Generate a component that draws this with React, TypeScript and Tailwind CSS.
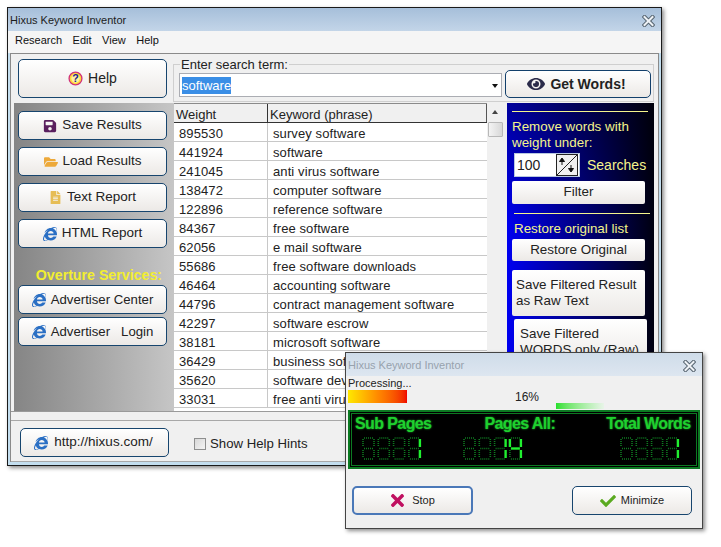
import type { ReactNode } from "react";
import { FaCheck, FaEye, FaFileAlt, FaFolderOpen, FaInternetExplorer, FaSave, FaTimes } from "react-icons/fa";

const rows = [
  ["895530", "survey software"],
  ["441924", "software"],
  ["241045", "anti virus software"],
  ["138472", "computer software"],
  ["122896", "reference software"],
  ["84367", "free software"],
  ["62056", "e mail software"],
  ["55686", "free software downloads"],
  ["46464", "accounting software"],
  ["44796", "contract management software"],
  ["42297", "software escrow"],
  ["38181", "microsoft software"],
  ["36429", "business software"],
  ["35620", "software development"],
  ["33031", "free anti virus"],
];

// segments of one lcd digit: x1 y1 x2 y2
const segments: Record<string, number[]> = {
  a: [2, 1, 11, 1],
  b: [12, 2, 12, 10],
  c: [12, 13, 12, 21],
  d: [2, 22, 11, 22],
  e: [1, 13, 1, 21],
  f: [1, 2, 1, 10],
  g: [2, 11.5, 11, 11.5],
};
const litByDigit: Record<string, string> = { "1": "bc", "4": "fgbc" };

function Lcd({ value, className }: { value: string; className?: string }) {
  return (
    <svg width="60" height="23" viewBox="0 0 60 23" className={className}>
      {value.split("").map((ch, i) => (
        <g key={i} transform={`translate(${i * 15.3} 0)`}>
          {Object.entries(segments)
            .sort(([a], [b]) => Number((litByDigit[ch] || "").includes(a)) - Number((litByDigit[ch] || "").includes(b)))
            .map(([name, [x1, y1, x2, y2]]) => {
              const lit = (litByDigit[ch] || "").includes(name);
              return (
                <line
                  key={name}
                  x1={x1}
                  y1={y1}
                  x2={x2}
                  y2={y2}
                  stroke={lit ? "#20f030" : "#0e7a20"}
                  strokeWidth={lit ? 2.4 : 1.6}
                  strokeDasharray={lit ? undefined : "1 1"}
                />
              );
            })}
        </g>
      ))}
    </svg>
  );
}

function Btn({ children, className }: { children: ReactNode; className: string }) {
  return (
    <div
      className={`flex items-center justify-center gap-[5px] rounded-[5px] border bg-gradient-to-b from-[#ffffff] to-[#ece9e6] text-[#222] ${className}`}
    >
      {children}
    </div>
  );
}

function HelpIcon() {
  return (
    <svg width="15" height="15" viewBox="0 0 14 14">
      <circle cx="7" cy="7" r="6" fill="#ffd83a" stroke="#d0307a" strokeWidth="1.2" />
      <circle cx="7" cy="7" r="3.9" fill="#fff2a0" />
      <text x="7" y="10.5" textAnchor="middle" fontSize="10" fontWeight="700" fill="#1a1a90" fontFamily="Liberation Sans">
        ?
      </text>
    </svg>
  );
}

function CloseIcon() {
  return (
    <svg width="13" height="12" viewBox="0 0 13 12">
      <path d="M2.5 2 10.5 10M10.5 2 2.5 10" stroke="#55636f" strokeWidth="4" strokeLinecap="square" />
      <path d="M2.5 2 10.5 10M10.5 2 2.5 10" stroke="#eef2f6" strokeWidth="2" strokeLinecap="square" />
    </svg>
  );
}

function Ie() {
  return <FaInternetExplorer className="text-[14px] text-[#2a6fc4]" />;
}

export default function App() {
  return (
    <div className="relative h-[547px] w-[721px] overflow-hidden bg-white [font-family:'Liberation_Sans',Arial,sans-serif]">
      {/* main window */}
      <div className="absolute left-[7px] top-[7px] flex h-[459px] w-[655px] flex-col border border-[#1a1a1a] bg-[#c3deef] shadow-[2px_2px_4px_rgba(0,0,0,0.45)]">
        <div className="flex h-[23px] shrink-0 items-center justify-between bg-gradient-to-b from-[#a6bfda] to-[#c3d5e8] pl-[2px] pr-[6px] pt-[2px] text-[11px] text-[#1c1c1c]">
          <span>Hixus Keyword Inventor</span>
          <CloseIcon />
        </div>
        <div className="flex h-[22px] shrink-0 items-center gap-[10.5px] bg-[#f5f5f5] pb-[3px] pl-[7px] text-[11px] text-[#111]">
          <span>Research</span>
          <span>Edit</span>
          <span>View</span>
          <span>Help</span>
        </div>
        <div className="mx-[2px] flex h-[409px] flex-col border-x border-t border-[#8a8a8a] bg-[#f0f0f0]">
          {/* top row */}
          <div className="flex h-[49px] shrink-0 items-start">
            <Btn className="ml-[7px] mt-[5px] h-[39px] w-[149px] border-[#17456e] text-[14px]">
              <HelpIcon />
              <span>Help</span>
            </Btn>
            <fieldset className="ml-[6px] mt-[3px] h-[45px] w-[481px] border border-[#cfcfcf] pl-[5px]">
              <legend className="ml-[1px] px-[1px] text-[13px] leading-[15px] text-[#222]">Enter search term:</legend>
              <div className="flex items-start">
                <div className="mt-[1px] flex h-[24px] w-[323px] items-center justify-between border border-[#abadb3] bg-white pl-[2px] pr-[3px]">
                  <span className="bg-[#3a8ee6] text-[13px] leading-[17px] text-white">software</span>
                  <span className="mt-[1px] h-0 w-0 border-x-[3px] border-t-[4px] border-x-transparent border-t-[#111]" />
                </div>
                <Btn className="-mt-[2px] ml-[3px] h-[28px] w-[146px] gap-[3px] border-[#123f6b] pr-[3px] text-[14px]">
                  <FaEye className="text-[18px] text-[#2b2b4a]" />
                  <span className="font-bold">Get Words!</span>
                </Btn>
              </div>
            </fieldset>
          </div>

          {/* middle */}
          <div className="ml-[3px] flex h-[308px] w-[640px] shrink-0">
            <div className="flex w-[160px] shrink-0 flex-col bg-gradient-to-r from-[#858585] to-[#c6c6c6] pl-[4px] pt-[8px]">
              <Btn className="h-[29px] w-[149px] border-[#17456e] text-[13.5px]">
                <FaSave className="text-[14px] text-[#5a1f5e]" />
                <span>Save Results</span>
              </Btn>
              <Btn className="mt-[7px] h-[29px] w-[149px] border-[#17456e] text-[13.5px]">
                <FaFolderOpen className="text-[14px] text-[#eda93a]" />
                <span>Load Results</span>
              </Btn>
              <Btn className="mt-[7px] h-[29px] w-[149px] border-[#17456e] text-[13.5px]">
                <FaFileAlt className="text-[13px] text-[#e6bd55]" />
                <span>Text Report</span>
              </Btn>
              <Btn className="mt-[7px] h-[29px] w-[149px] border-[#17456e] text-[13.5px]">
                <Ie />
                <span>HTML Report</span>
              </Btn>
              <div className="mt-[18px] h-[18px] w-[144px] whitespace-nowrap text-right text-[14.2px] font-bold leading-[18px] text-[#f2ee30]">Overture Services:</div>
              <Btn className="mt-[1px] h-[29px] w-[149px] border-[#17456e] text-[13.2px]">
                <Ie />
                <span>Advertiser Center</span>
              </Btn>
              <Btn className="mt-[3px] h-[29px] w-[149px] border-[#17456e] text-[13.2px]">
                <Ie />
                <span className="whitespace-pre">Advertiser   Login</span>
              </Btn>
            </div>

            <div className="w-[313px] shrink-0 overflow-hidden bg-white">
              <div className="flex h-[20px] border-y border-t-[#8a8a8a] border-b-[#333] bg-[#f0f0f0] text-[13px] leading-[21px] text-[#222]">
                <div className="w-[94px] shrink-0 border-r border-[#333] pl-[2px]">Weight</div>
                <div className="flex-1 border-r border-[#555] pl-[2px]">Keyword (phrase)</div>
              </div>
              {rows.map(([weight, word]) => (
                <div key={weight} className="flex h-[19px] border-b border-[#c8c8c8] text-[13px] leading-[22px] tracking-[0.1px] text-[#222]">
                  <div className="w-[94px] shrink-0 border-r border-[#c8c8c8] pl-[5px]">{weight}</div>
                  <div className="flex-1 pl-[5px]">{word}</div>
                </div>
              ))}
            </div>

            <div className="flex w-[16px] shrink-0 flex-col items-center bg-[#f0f0f0] pt-[7px]">
              <span className="h-0 w-0 border-x-[3px] border-b-[4px] border-x-transparent border-b-[#444]" />
              <div className="mt-[8px] h-[15px] w-[15px] rounded-[1px] border border-[#b8b8b8] bg-gradient-to-r from-[#f4f4f4] to-[#d8d8d8]" />
            </div>

            <div className="ml-[4px] flex w-[147px] shrink-0 flex-col bg-[linear-gradient(to_bottom,rgba(0,0,0,0.35),transparent_40%),linear-gradient(to_right,#0000f0,#000010)] pt-[8px] text-[13.4px] text-[#f4f48c]">
              <div className="ml-[5px] h-px w-[136px] bg-[#f4f48c]" />
              <div className="ml-[5px] mt-[7px] whitespace-nowrap leading-[16px]">
                Remove words with
                <br />
                weight under:
              </div>
              <div className="mt-[2px] flex items-center">
                <div className="ml-[7px] flex h-[24px] w-[66px] items-center justify-between border border-[#b8c8e0] bg-white pl-[2px] text-[14px] text-[#222]">
                  <span>100</span>
                  <svg width="22" height="22" viewBox="0 0 22 22" className="mr-[1px]">
                    <rect x="0.5" y="0.5" width="21" height="21" fill="#f0f0f0" stroke="#222" />
                    <line x1="1" y1="21" x2="21" y2="1" stroke="#222" />
                    <path d="M6 11V5M3.5 7.5 6 4l2.5 3.5zM15 11v6M12.5 14.5 15 18l2.5-3.5z" fill="#111" stroke="#111" />
                  </svg>
                </div>
                <span className="ml-[7px] text-[14px]">Searches</span>
              </div>
              <div className="ml-[5px] mt-[4px] flex h-[23px] w-[133px] items-center justify-center rounded-[2px] bg-gradient-to-b from-[#ffffff] to-[#ece9e6] text-[#222]">Filter</div>
              <div className="ml-[7px] mt-[9px] h-px w-[136px] bg-[#f4f48c]" />
              <div className="ml-[7px] mt-[7px] leading-[16px]">Restore original list</div>
              <div className="ml-[5px] mt-[2px] flex h-[22px] w-[133px] items-center justify-center rounded-[2px] bg-gradient-to-b from-[#ffffff] to-[#ece9e6] text-[#222]">Restore Original</div>
              <div className="ml-[5px] mt-[9px] flex h-[46px] w-[133px] items-center rounded-[2px] bg-gradient-to-b from-[#ffffff] to-[#ece9e6] pl-[4px] leading-[16px] text-[#222]">
                <span>
                  Save Filtered Result
                  <br />
                  as Raw Text
                </span>
              </div>
              <div className="ml-[7px] mt-[3px] flex h-[46px] w-[133px] items-center rounded-[2px] bg-gradient-to-b from-[#ffffff] to-[#ece9e6] pl-[6px] leading-[16px] text-[#222]">
                <span>
                  Save Filtered
                  <br />
                  WORDS only (Raw)
                </span>
              </div>
            </div>
          </div>

          <div className="h-px shrink-0 bg-[#9a9a9a]" />
          <div className="mt-[8px] flex h-[42px] shrink-0 items-start border-y border-[#a8a8a8] pl-[9px] pt-[7px]">
            <Btn className="h-[29px] w-[149px] gap-[6px] border-[#17456e] pr-[2px] text-[13.5px]">
              <Ie />
              <span>http://hixus.com/</span>
            </Btn>
            <div className="ml-[25px] mt-[10px] h-[12px] w-[12px] border border-[#8e8f8f] bg-gradient-to-br from-[#d8d8d8] to-[#f4f4f4]" />
            <span className="ml-[4px] mt-[7px] text-[13.2px] leading-[17px] text-[#222]">Show Help Hints</span>
          </div>
        </div>
      </div>

      {/* progress dialog */}
      <div className="absolute left-[345px] top-[352px] flex h-[177px] w-[358px] flex-col border border-[#444] bg-[#f0f0f0] shadow-[2px_2px_4px_rgba(0,0,0,0.45)]">
        <div className="flex h-[23px] shrink-0 items-center justify-between bg-gradient-to-b from-[#cfdce9] to-[#dde6f0] pl-[2px] pr-[6px] pt-[2px] text-[11px] text-[#97a2ad]">
          <span>Hixus Keyword Inventor</span>
          <CloseIcon />
        </div>
        <div className="flex h-[34px] shrink-0 pl-[2px]">
          <div className="w-[60px] shrink-0">
            <div className="h-[14px] whitespace-nowrap text-[11px] leading-[14px] text-[#222]">Processing...</div>
            <div className="h-[13px] w-[59px] bg-gradient-to-r from-[#ffe800] via-[#ff8a00] to-[#f00000]" />
          </div>
          <span className="ml-[107px] mt-[14px] text-[12px] leading-[14px] text-[#222]">16%</span>
          <div className="ml-[17px] mt-[27px] h-[6px] w-[48px] bg-gradient-to-r from-[#22e02a] to-[#e8f4e8]" />
        </div>
        <div className="ml-[2px] h-[59px] w-[352px] shrink-0 border-2 border-[#0c7a22] bg-black outline outline-1 -outline-offset-4 outline-[#0c7a22]">
          <div className="flex h-[24px] items-end pb-[3px] text-[16px] font-bold leading-[18px] tracking-[-0.6px] text-[#1ed02e] [text-shadow:0_0_2px_#1fae2c]">
            <span className="ml-[5px]">Sub Pages</span>
            <span className="ml-[53px]">Pages All:</span>
            <span className="ml-[51px]">Total Words</span>
          </div>
          <div className="mt-[1px] flex">
            <Lcd value="xxx1" className="ml-[12px]" />
            <Lcd value="xx14" className="ml-[41px]" />
            <Lcd value="xxx1" className="ml-[97px]" />
          </div>
        </div>
        <div className="mt-[17px] flex justify-between pl-[6px] pr-[10px]">
          <Btn className="h-[29px] w-[121px] gap-[4px] border-2 border-[#4a78b8] pr-[2px] text-[11px]">
            <FaTimes className="text-[19px] text-[#c01060]" />
            <span>Stop</span>
          </Btn>
          <Btn className="h-[29px] w-[120px] border-[#17456e] text-[11px]">
            <FaCheck className="text-[16px] text-[#5aaa20]" />
            <span>Minimize</span>
          </Btn>
        </div>
      </div>
    </div>
  );
}
